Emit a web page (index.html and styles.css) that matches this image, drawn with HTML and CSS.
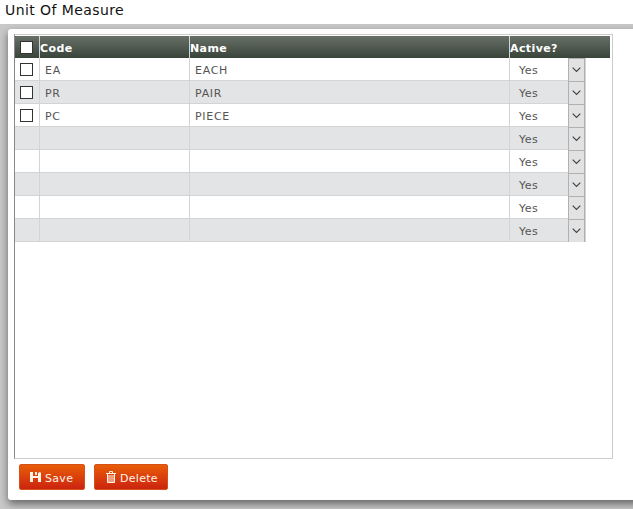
FILE: index.html
```
<!DOCTYPE html>
<html lang="en">
<head>
<meta charset="utf-8">
<title>Unit Of Measure</title>
<link rel="stylesheet" href="styles.css">
</head>
<body>
<h1 class="title">Unit Of Measure</h1>
<main class="stage">
  <section class="panel">
    <div class="grid-box">
      <div class="row head"><div class="check"><span class="box"></span></div><div class="cell">Code</div><div class="cell">Name</div><div class="cell">Active?</div></div>
      <div class="rows" id="rows"></div>
    </div>
    <div class="actions">
      <button class="btn save"><svg width="12" height="11" viewBox="0 0 12 11"><path fill="#fff3e6" d="M0 0H3V4H8V1L10 0L11 1V10H8V6H3V10H0ZM5 0H7V3H5Z"/></svg><span>Save</span></button>
      <button class="btn delete"><svg width="10" height="12" viewBox="0 0 10 12"><path fill="#fff3e6" fill-opacity=".55" d="M2 4H8V11H2Z"/><path fill="none" stroke="#fff3e6" d="M3.5 2V.5H6.5V2M0 2.5H10M1.5 3V11.5H8.5V3"/></svg><span>Delete</span></button>
    </div>
  </section>
</main>
<script src="grid.js"></script>
</body>
</html>
```
FILE: styles.css
```
* { box-sizing: border-box; }
body {
  margin: 0;
  height: 509px;
  overflow: hidden;
  background: #fff;
  font-family: "DejaVu Sans", Verdana, sans-serif;
  font-size: 11px;
  color: #555;
}
.title {
  margin: 0;
  height: 24px;
  padding-left: 5px;
  font-size: 14px;
  font-weight: 400;
  line-height: 20px;
  letter-spacing: .42px;
  color: #111;
}
.stage {
  height: 485px;
  padding: 5px 0 0 8px;
  background: #c9c9ca;
  overflow: hidden;
}
.panel {
  width: 645px;
  height: 471px;
  padding: 5px 0 0 6px;
  background: #fff;
  border-radius: 3px;
  box-shadow: 0 4px 9px 0 rgba(0, 0, 0, .5);
}
.grid-box {
  width: 599px;
  height: 425px;
  padding-top: 1px;
  border: 1px solid #ccc;
  border-left-color: #888;
}
.row {
  display: grid;
  grid-template-columns: 25px 150px 320px 76px;
  width: 571px;
  height: 23px;
  line-height: 25px;
  border-bottom: 1px solid #d3d4d5;
}
.row:nth-child(even) { background: #e3e4e5; }
.row > div {
  height: 22px;
  border-right: 1px solid #d3d4d5;
}
.cell { padding-left: 5px; letter-spacing: .7px; }
.row.head {
  width: 595px;
  height: 22px;
  border: 0;
  background: linear-gradient(#687068, #39443a);
  color: #fff;
  font-weight: 700;
}
.head .cell { padding-left: 0; letter-spacing: .4px; }
.row.head > div:last-child { border-right: 0; }
.check {
  display: flex;
  align-items: center;
  padding-left: 5px;
}
.box {
  width: 13px;
  height: 13px;
  border: 1px solid #333;
  background: #fff;
}
.select {
  display: flex;
  justify-content: space-between;
  padding-left: 9px;
  letter-spacing: .5px;
}
.arrow {
  display: flex;
  align-items: center;
  justify-content: center;
  width: 17px;
  height: 23px;
  border: 1px solid #b0b0b0;
  border-bottom: 0;
  background: #e2e2e2;
}
.actions {
  display: flex;
  gap: 9px;
  padding: 5px 0 0 5px;
}
.btn {
  display: flex;
  align-items: center;
  height: 26px;
  padding: 0;
  border: 1px solid #d6501a;
  border-radius: 2px;
  background: linear-gradient(#e85d08, #cc2410);
  color: #fff3e6;
  font: 11px "DejaVu Sans", Verdana, sans-serif;
  letter-spacing: .3px;
}
.btn span { padding-top: 2px; }
.save { width: 66px; padding-left: 10px; gap: 3px; }
.delete { width: 74px; padding-left: 11px; gap: 4px; }
```
FILE: grid.js
```
const units = [["EA", "EACH"], ["PR", "PAIR"], ["PC", "PIECE"], [], [], [], [], []];
const arrow = '<svg width="9" height="6" viewBox="0 0 9 6"><path d="M.7 .7L4.5 4.5L8.3 .7" fill="none" stroke="#444" stroke-width="1.2"/></svg>';
document.getElementById("rows").innerHTML = units.map(([code, name]) =>
  `<div class="row"><div class="check">${code ? '<span class="box"></span>' : ""}</div><div class="cell">${code || ""}</div><div class="cell">${name || ""}</div><div class="select"><span>Yes</span><span class="arrow">${arrow}</span></div></div>`
).join("");
```
